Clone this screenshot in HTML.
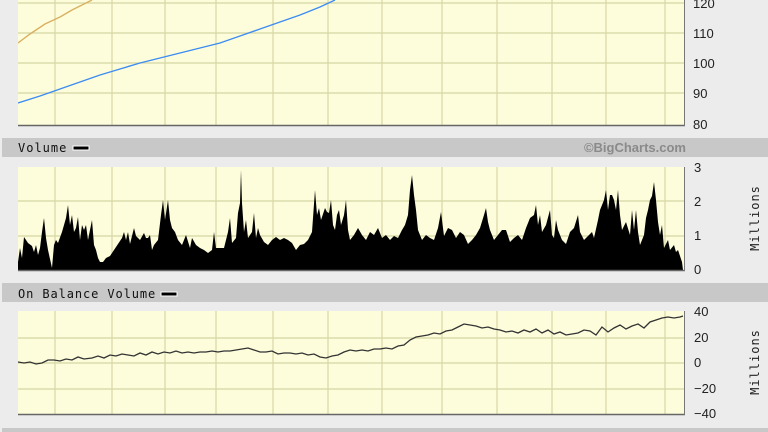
<!DOCTYPE html>
<html style="overflow:hidden"><head><style>
html,body{margin:0;width:768px;height:432px;background:#ececec;overflow:hidden}
body{font-family:"DejaVu Sans Mono","Liberation Mono",monospace}
svg{display:block}
.ax{font-family:"Liberation Sans",sans-serif;font-size:13px;fill:#222}
</style></head><body>
<svg width="768" height="432" xmlns="http://www.w3.org/2000/svg" style="position:absolute;left:0;top:0">
<defs>
<g id="vg" stroke="#d6d6a4" stroke-width="1.2">
<line x1="55" x2="55" y1="0" y2="500"/><line x1="112" x2="112" y1="0" y2="500"/><line x1="165" x2="165" y1="0" y2="500"/><line x1="216" x2="216" y1="0" y2="500"/><line x1="273" x2="273" y1="0" y2="500"/><line x1="328" x2="328" y1="0" y2="500"/><line x1="382" x2="382" y1="0" y2="500"/><line x1="442" x2="442" y1="0" y2="500"/><line x1="497" x2="497" y1="0" y2="500"/><line x1="552" x2="552" y1="0" y2="500"/><line x1="606" x2="606" y1="0" y2="500"/><line x1="665" x2="665" y1="0" y2="500"/>
</g>
<clipPath id="c1"><rect x="18" y="0" width="666" height="125"/></clipPath>
<clipPath id="c2"><rect x="18" y="167" width="666" height="103"/></clipPath>
<clipPath id="c3"><rect x="18" y="311" width="666" height="103"/></clipPath>
</defs>
<rect x="18" y="0" width="666" height="125" fill="#fdfddc"/>
<g clip-path="url(#c1)"><use href="#vg"/>
<g stroke="#d6d6a4" stroke-width="1.2"><line x1="0" x2="700" y1="3" y2="3"/><line x1="0" x2="700" y1="33" y2="33"/><line x1="0" x2="700" y1="63" y2="63"/><line x1="0" x2="700" y1="93" y2="93"/></g>
<polyline fill="none" stroke="#3d8cf0" stroke-width="1.4" points="18,103 40,96 60,89 80,82 100,75 120,69 140,63 160,58 180,53 200,48 220,43 240,36 260,29 280,22 300,15 320,7 335,0"/>
<polyline fill="none" stroke="#d9b060" stroke-width="1.4" points="18,43 30,34 45,24 60,17 72,10 82,5 92,0"/>
</g>
<line x1="18" x2="685" y1="125.5" y2="125.5" stroke="#666" stroke-width="1.5"/>
<line x1="684.5" x2="684.5" y1="0" y2="126" stroke="#777"/>
<g class="ax"><text x="693" y="8">120</text><text x="693" y="38">110</text><text x="693" y="68">100</text><text x="693" y="98">90</text><text x="693" y="129">80</text></g>
<rect x="2" y="138" width="766" height="19" fill="#c8c8c8"/>
<text x="18" y="152" font-size="12" fill="#111" letter-spacing="1">Volume</text>
<rect x="73" y="146" width="16" height="4" fill="#000" stroke="#fff" stroke-width="1"/>
<text x="686" y="152" font-size="13" font-weight="bold" fill="#8a8a8a" text-anchor="end" font-family="Liberation Sans,sans-serif">©BigCharts.com</text>
<rect x="18" y="167" width="666" height="103" fill="#fdfddc"/>
<g clip-path="url(#c2)"><use href="#vg"/>
<g stroke="#d6d6a4" stroke-width="1.2"><line x1="0" x2="700" y1="201" y2="201"/><line x1="0" x2="700" y1="236" y2="236"/></g>
<polygon fill="#000" points="18,270 18,262 20,248 22,258 24,237 28,243 32,246 34,252 36,245 38,255 40,248 42,232 44,218 46,238 48,250 52,268 54,245 56,240 58,243 62,232 66,218 68,205 70,225 72,215 74,232 76,228 78,217 80,240 82,225 84,230 86,225 88,240 92,220 94,245 96,250 98,258 100,262 103,262 106,258 110,256 114,250 118,244 122,238 124,232 126,240 128,232 130,244 134,228 136,236 140,240 144,233 146,238 148,238 150,235 152,250 154,245 158,240 161,215 163,200 165,220 168,200 170,220 172,228 175,232 178,240 182,245 186,235 190,248 192,238 196,245 200,248 204,250 208,253 212,250 214,232 216,248 220,248 224,248 228,232 230,218 232,243 236,238 238,213 240,203 241,170 242,203 244,232 246,220 248,238 252,232 254,213 256,238 258,228 260,235 264,242 268,245 272,240 276,237 280,240 284,238 288,240 292,243 296,250 300,245 304,244 308,240 312,232 315,190 317,215 319,208 321,220 323,214 325,208 327,212 329,213 331,200 333,225 335,230 337,215 339,210 341,225 344,215 346,200 348,230 350,240 354,235 358,228 362,235 366,240 370,232 374,235 378,228 382,238 386,235 390,240 394,236 398,238 402,230 405,225 408,215 410,190 412,175 414,195 416,210 418,230 422,240 426,235 430,238 434,240 438,228 441,212 444,236 448,228 452,230 456,238 460,232 464,235 468,244 472,240 476,235 480,228 484,215 486,208 488,222 490,230 494,240 498,235 502,230 506,230 510,242 514,238 518,235 522,240 526,228 530,218 534,215 536,205 538,225 540,215 542,232 546,225 550,210 552,235 554,238 556,220 558,230 562,240 566,244 570,232 574,228 578,215 580,232 584,240 588,236 592,232 594,238 598,220 600,210 604,200 606,190 608,210 610,195 612,195 614,200 616,210 618,190 620,215 622,230 626,222 630,235 632,210 634,230 636,210 638,232 640,245 644,235 646,218 648,210 650,200 652,196 654,182 656,200 658,222 660,235 662,225 664,248 668,240 670,250 674,245 676,252 678,250 680,256 682,262 683,270"/>
</g>
<line x1="18" x2="685" y1="270.5" y2="270.5" stroke="#666" stroke-width="1.5"/>
<line x1="684.5" x2="684.5" y1="167" y2="271" stroke="#777"/>
<g class="ax"><text x="694" y="172">3</text><text x="694" y="206">2</text><text x="694" y="240">1</text><text x="694" y="274">0</text></g>
<text transform="translate(759,218) rotate(-90)" font-size="12" fill="#222" text-anchor="middle" letter-spacing="1">Millions</text>
<rect x="2" y="283" width="766" height="19" fill="#c8c8c8"/>
<text x="18" y="298" font-size="12" fill="#111" letter-spacing="0.9">On Balance Volume</text>
<rect x="161" y="292" width="16" height="4" fill="#000" stroke="#fff" stroke-width="1"/>
<rect x="18" y="311" width="666" height="103" fill="#fdfddc"/>
<g clip-path="url(#c3)"><use href="#vg"/>
<g stroke="#d6d6a4" stroke-width="1.2"><line x1="0" x2="700" y1="338" y2="338"/><line x1="0" x2="700" y1="363" y2="363"/><line x1="0" x2="700" y1="389" y2="389"/></g>
<polyline fill="none" stroke="#333" stroke-width="1.3" points="18,362 24,363 30,362 36,364 42,363 48,360 54,360 60,361 66,359 72,360 78,357 84,359 92,358 98,356 104,358 110,355 116,356 122,354 128,355 134,356 140,353 146,355 152,352 158,354 164,352 170,353 176,351 182,353 188,352 194,353 200,352 206,352 212,351 218,352 224,351 230,351 236,350 242,349 248,348 254,350 260,352 266,352 272,351 278,354 284,353 290,353 296,354 302,353 308,355 314,354 320,357 326,358 332,356 338,355 344,352 350,350 356,351 362,350 368,351 374,349 380,349 386,348 392,349 398,346 404,345 410,340 416,337 422,336 428,335 434,333 440,334 446,331 452,330 458,327 464,324 470,325 476,326 482,328 488,327 494,329 500,330 506,332 512,331 518,333 524,330 530,332 536,329 542,333 548,330 554,334 560,332 566,335 572,334 578,333 584,330 590,331 596,335 602,327 608,332 614,328 620,325 626,329 632,326 638,324 644,328 650,322 656,320 662,318 668,317 674,318 680,317 683,316"/>
</g>
<line x1="18" x2="685" y1="414.5" y2="414.5" stroke="#666" stroke-width="1.5"/>
<line x1="684.5" x2="684.5" y1="311" y2="415" stroke="#777"/>
<g class="ax"><text x="694" y="316">40</text><text x="694" y="342">20</text><text x="694" y="367">0</text><text x="694" y="393">−20</text><text x="694" y="418">−40</text></g>
<text transform="translate(759,362) rotate(-90)" font-size="12" fill="#222" text-anchor="middle" letter-spacing="1">Millions</text>
<rect x="2" y="428" width="766" height="4" fill="#c8c8c8"/>
</svg>
</body></html>
